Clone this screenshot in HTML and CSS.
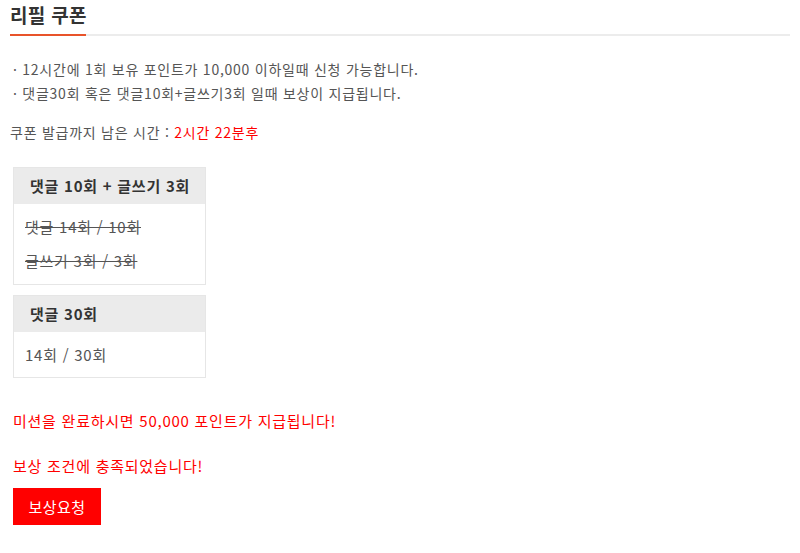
FILE: index.html
```html
<!DOCTYPE html>
<html lang="ko">
<head>
<meta charset="utf-8">
<link rel="stylesheet" href="styles.css">
</head>
<body>
<div class="page">
  <div class="title-bar">
    <h2 class="title">리필 쿠폰</h2>
  </div>
  <ul class="notes">
    <li>· 12시간에 1회 보유 포인트가 10,000 이하일때 신청 가능합니다.</li>
    <li>· 댓글30회 혹은 댓글10회+글쓰기3회 일때 보상이 지급됩니다.</li>
  </ul>
  <p class="remain">쿠폰 발급까지 남은 시간 : <span class="red">2시간 22분후</span></p>
  <div class="box">
    <div class="box-head">댓글 10회 + 글쓰기 3회</div>
    <div class="box-body">
      <div class="row done">댓글 14회 / 10회</div>
      <div class="row done">글쓰기 3회 / 3회</div>
    </div>
  </div>
  <div class="box box-single">
    <div class="box-head">댓글 30회</div>
    <div class="box-body">
      <div class="row">14회 / 30회</div>
    </div>
  </div>
  <p class="msg">미션을 완료하시면 50,000 포인트가 지급됩니다!</p>
  <p class="msg msg2">보상 조건에 충족되었습니다!</p>
  <button class="btn">보상요청</button>
</div>
</body>
</html>
```
FILE: styles.css
```css
* { box-sizing: border-box; }
html, body { margin: 0; padding: 0; background: #fff; }
body {
  font-family: "Noto Sans CJK KR", "Noto Sans", sans-serif;
  font-size: 14px;
  letter-spacing: 0.75px;
  color: #555;
}
.page { padding: 0 10px 0 10px; width: 800px; }
.title-bar {
  width: 780px;
  border-bottom: 2px solid #ececec;
  height: 36px;
  display: flex;
  align-items: flex-start;
}
.title {
  margin: 0;
  padding-top: 2px;
  font-size: 19px;
  letter-spacing: 0.3px;
  font-weight: bold;
  color: #333;
  height: 36px;
  width: 76px;
  border-bottom: 2px solid #e8532a;
  line-height: 26px;
  white-space: nowrap;
}
.notes { list-style: none; margin: 21px 0 0 3px; padding: 0; }
.notes li { line-height: 24px; }
.remain { margin: 15px 0 0 0; line-height: 24px; }
.red { color: #f00; }
.box {
  width: 193px;
  margin: 23px 0 0 3px;
  border: 1px solid #e6e6e6;
}
.box + .box { margin-top: 10px; }
.box-head {
  background: #ebebeb;
  height: 36px;
  line-height: 36px;
  padding-left: 16px;
  font-size: 15px;
  font-weight: bold;
  color: #333;
  white-space: nowrap;
}
.box-body { padding: 6px 11px 6px; }
.box-single .box-body { padding-bottom: 5px; }
.row { line-height: 34px; font-size: 15px; }
.row.done { text-decoration: line-through; }
.msg { color: #f00; margin: 31px 0 0 3px; line-height: 24px; font-size: 15px; }
.msg2 { margin-top: 21px; }
.btn {
  margin: 10px 0 0 3px;
  background: #f00;
  color: #fff;
  border: 0;
  width: 88px;
  height: 37px;
  font-family: inherit;
  font-size: 15px;
  letter-spacing: 0.5px;
  padding: 0;
}
```
